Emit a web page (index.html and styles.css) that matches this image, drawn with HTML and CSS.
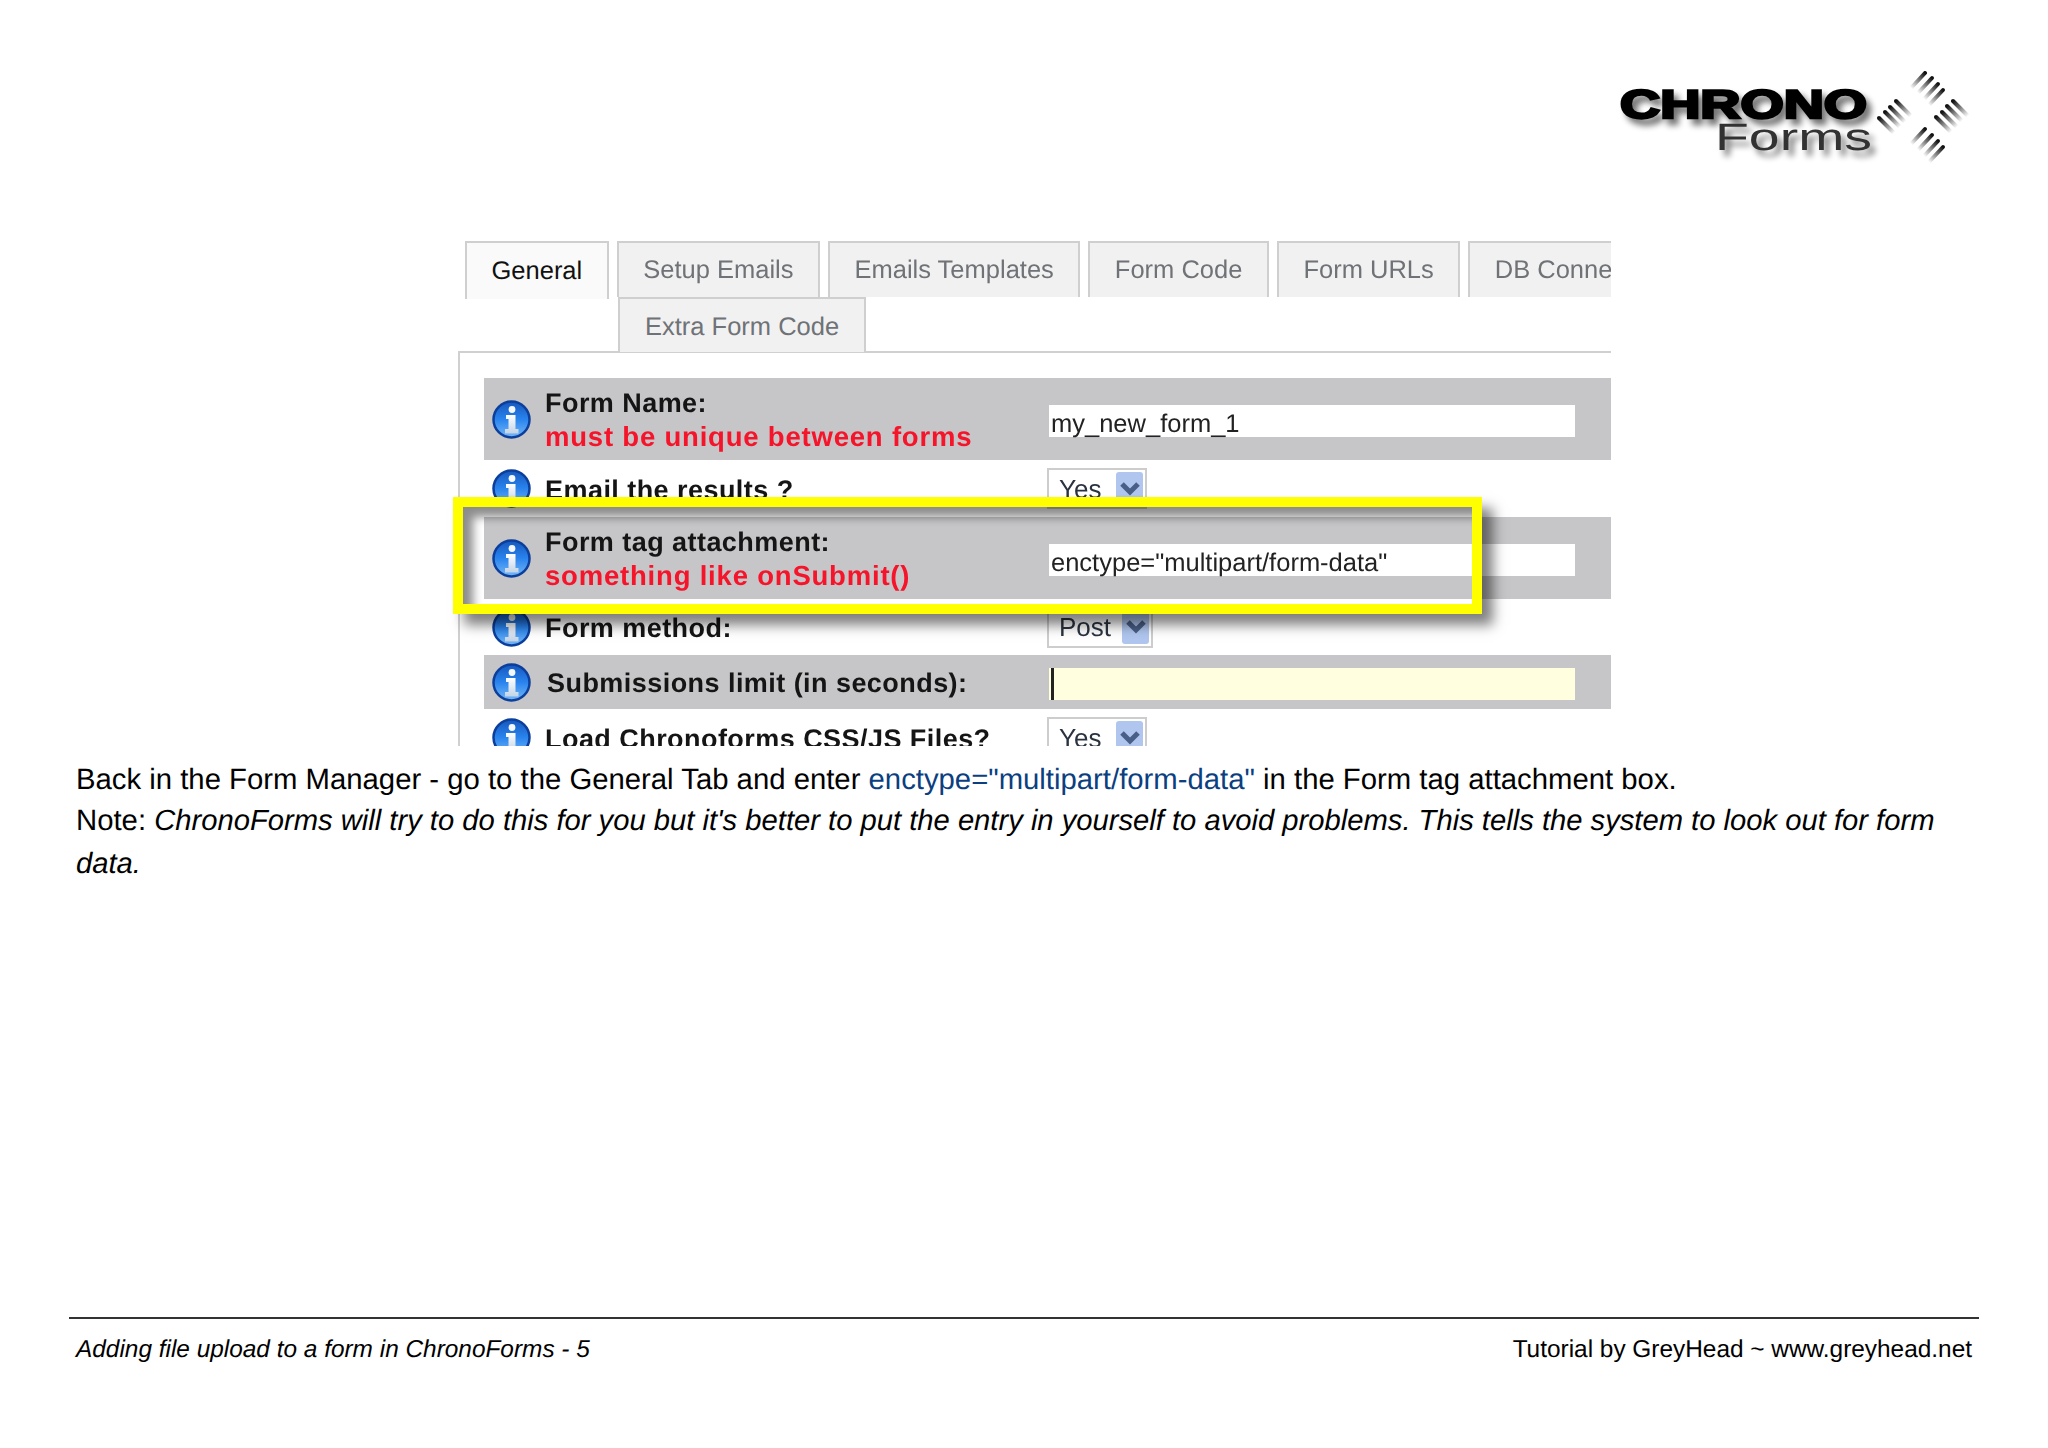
FILE: index.html
```html
<!DOCTYPE html>
<html lang="en">
<head>
    <meta charset="UTF-8">
    <title>Adding file upload to a form in ChronoForms - 5</title>
    <link rel="stylesheet" href="styles.css">
</head>
<body>
    <div class="page">
        <header class="top">
            <svg class="logo" width="380" height="120" viewBox="0 0 380 120">
                <defs>
                    <filter id="soft" x="-20%" y="-30%" width="150%" height="170%">
                        <feGaussianBlur in="SourceAlpha" stdDeviation="3"/>
                        <feOffset dx="5" dy="6"/>
                        <feComponentTransfer><feFuncA type="linear" slope="0.55"/></feComponentTransfer>
                        <feMerge><feMergeNode/><feMergeNode in="SourceGraphic"/></feMerge>
                    </filter>
                    <linearGradient id="fadeL" x1="1" y1="0" x2="0" y2="1">
                        <stop offset="0" stop-color="#111"/>
                        <stop offset="1" stop-color="#111" stop-opacity="0"/>
                    </linearGradient>
                    <linearGradient id="fadeR" x1="0" y1="0" x2="1" y2="1">
                        <stop offset="0" stop-color="#111"/>
                        <stop offset="1" stop-color="#111" stop-opacity="0"/>
                    </linearGradient>
                    <line id="markL" x1="0" y1="0" x2="-14" y2="15" stroke="url(#fadeL)"/>
                    <line id="markR" x1="0" y1="0" x2="15" y2="15" stroke="url(#fadeR)"/>
                </defs>
                <text class="logo-chrono" x="10" y="58" textLength="247" lengthAdjust="spacingAndGlyphs" filter="url(#soft)">CHRONO</text>
                <text class="logo-forms" x="105" y="90" textLength="157" lengthAdjust="spacingAndGlyphs" filter="url(#soft)">Forms</text>
                <g class="logo-marks">
                    <!-- top -->
                    <use href="#markL" x="315" y="13"/>
                    <use href="#markL" x="322" y="18"/>
                    <use href="#markL" x="328" y="24"/>
                    <use href="#markL" x="333" y="30"/>
                    <!-- left -->
                    <use href="#markR" x="269" y="58"/>
                    <use href="#markR" x="275" y="52"/>
                    <use href="#markR" x="280" y="47"/>
                    <use href="#markR" x="286" y="41"/>
                    <!-- right -->
                    <use href="#markR" x="326" y="57"/>
                    <use href="#markR" x="332" y="52"/>
                    <use href="#markR" x="337" y="46"/>
                    <use href="#markR" x="343" y="41"/>
                    <!-- bottom -->
                    <use href="#markL" x="315" y="69"/>
                    <use href="#markL" x="322" y="75"/>
                    <use href="#markL" x="328" y="81"/>
                    <use href="#markL" x="333" y="87"/>
                </g>
            </svg>
        </header>

        <div class="shot">
            <div class="clip">
                <div class="tabs">
                    <span class="tab tab-on">General</span>
                    <span class="tab">Setup Emails</span>
                    <span class="tab">Emails Templates</span>
                    <span class="tab">Form Code</span>
                    <span class="tab">Form URLs</span>
                    <span class="tab tab-cut">DB Conne</span>
                </div>
                <div class="tabs2">
                    <span class="tab">Extra Form Code</span>
                </div>
                <div class="panel">
                    <div class="row grey tall">
                        <svg class="info"><use href="#info"/></svg>
                        <div class="lbl">Form Name:<em>must be unique between forms</em></div>
                        <div class="field">my_new_form_1</div>
                    </div>
                    <div class="row h57">
                        <svg class="info"><use href="#info"/></svg>
                        <div class="lbl">Email the results ?</div>
                        <div class="sel">Yes<i><svg width="22" height="14" viewBox="0 0 22 14"><path d="M3 2l8 8 8-8"/></svg></i></div>
                    </div>
                    <div class="row grey tall">
                        <svg class="info"><use href="#info"/></svg>
                        <div class="lbl">Form tag attachment:<em>something like onSubmit()</em></div>
                        <div class="field">enctype="multipart/form-data"</div>
                    </div>
                    <div class="row h56">
                        <svg class="info"><use href="#info"/></svg>
                        <div class="lbl">Form method:</div>
                        <div class="sel sel-wide">Post<i><svg width="22" height="14" viewBox="0 0 22 14"><path d="M3 2l8 8 8-8"/></svg></i></div>
                    </div>
                    <div class="row grey h54">
                        <svg class="info"><use href="#info"/></svg>
                        <div class="lbl lbl-nudge">Submissions limit (in seconds):</div>
                        <div class="field field-on"><b></b></div>
                    </div>
                    <div class="row h57">
                        <svg class="info"><use href="#info"/></svg>
                        <div class="lbl">Load Chronoforms CSS/JS Files?</div>
                        <div class="sel">Yes<i><svg width="22" height="14" viewBox="0 0 22 14"><path d="M3 2l8 8 8-8"/></svg></i></div>
                    </div>
                </div>
            </div>
            <div class="mark"></div>
        </div>

        <div class="copy">
            <p>Back in the Form Manager - go to the General Tab and enter <span class="code">enctype="multipart/form-data"</span> in the Form tag attachment box.</p>
            <p>Note: <em>ChronoForms will try to do this for you but it's better to put the entry in yourself to avoid problems. This tells the system to look out for form data.</em></p>
        </div>

        <footer class="foot">
            <em>Adding file upload to a form in ChronoForms - 5</em>
            <span>Tutorial by GreyHead ~ www.greyhead.net</span>
        </footer>
    </div>

    <svg width="0" height="0" class="defs">
        <defs>
            <linearGradient id="ball" x1="0" y1="0" x2="0" y2="1">
                <stop offset="0" stop-color="#1557bd"/>
                <stop offset="0.5" stop-color="#2a84ee"/>
                <stop offset="1" stop-color="#74b8f7"/>
            </linearGradient>
            <linearGradient id="stem" x1="0" y1="0" x2="0" y2="1">
                <stop offset="0" stop-color="#ffffff"/>
                <stop offset="1" stop-color="#c3d3e6"/>
            </linearGradient>
            <symbol id="info" viewBox="0 0 39 39">
                <circle cx="19.5" cy="19.5" r="18" fill="url(#ball)" stroke="#0c3f9c" stroke-width="2.5"/>
                <circle cx="20" cy="9.5" r="3.4" fill="#f4f8fc"/>
                <path d="M14 15h9.5v14h3v4.5H13v-4.5h3.5v-10H14z" fill="url(#stem)"/>
            </symbol>
        </defs>
    </svg>
</body>
</html>
```

FILE: styles.css
```css
body {
    margin: 0;
    background: #fff;
    color: #000;
    font-family: "Liberation Sans", Arial, sans-serif;
    text-rendering: geometricPrecision;
}
.page {
    width: 2048px;
    height: 1448px;
    position: relative;
    overflow: hidden;
}
.defs {
    position: absolute;
}

/* logo */
.top {
    height: 241px;
    display: flex;
    justify-content: flex-end;
    align-items: flex-start;
    padding: 60px 58px 0 0;
    box-sizing: border-box;
}
.logo {
    filter: blur(0.7px);
}
.logo-chrono {
    font: bold 40px "Liberation Sans", sans-serif;
    stroke: #000;
    stroke-width: 2.5px;
    fill: #000;
}
.logo-forms {
    font: 38px "Liberation Sans", sans-serif;
    fill: #333;
}
.logo-marks {
    stroke-width: 4px;
    stroke-linecap: round;
}

/* screenshot */
.shot {
    position: relative;
    width: 1153px;
    height: 505px;
    margin-left: 458px;
    filter: blur(0.7px);
}
.clip {
    height: 505px;
    overflow: hidden;
}
.tabs {
    display: flex;
    gap: 8px;
    height: 56px;
    padding-left: 7px;
    white-space: nowrap;
}
.tabs2 {
    display: flex;
    height: 55px;
    padding-left: 160px;
}
.tab {
    display: flex;
    align-items: center;
    justify-content: center;
    box-sizing: border-box;
    padding: 1px 24.5px 0;
    height: 56px;
    background: #f1f1f1;
    border: 2px solid #cfcfcf;
    border-bottom: 0;
    color: #6f7276;
    font-size: 25.5px;
}
.tab-on {
    height: 58px;
    background: #fafafa;
    color: #111;
    position: relative;
}
.tab-cut {
    border-right: 0;
    justify-content: flex-start;
    flex: 1;
    min-width: 0;
    overflow: hidden;
}
.tabs2 .tab {
    height: 55px;
    padding: 3px 25px 0;
    position: relative;
    z-index: 1;
}
.panel {
    border-top: 2px solid #d0d0d0;
    border-left: 2px solid #d0d0d0;
    margin-top: -1px;
    padding: 25px 0 0 24px;
}
.row {
    display: flex;
    align-items: center;
    padding-left: 8px;
}
.row.grey {
    background: #c6c5c7;
}
.tall { height: 82px; }
.h57 { height: 57px; }
.h56 { height: 56px; }
.h54 { height: 54px; }
.info {
    width: 39px;
    height: 39px;
    flex: none;
    margin-right: 14px;
}
.lbl {
    width: 504px;
    flex: none;
    padding-top: 2px;
    font: bold 27px/34px "Liberation Sans", sans-serif;
    letter-spacing: 0.45px;
    color: #151515;
}
.lbl em {
    display: block;
    font-style: normal;
    font-size: 27.5px;
    letter-spacing: 0.8px;
    color: #f5142a;
}
.lbl-nudge {
    padding-left: 2px;
    width: 502px;
}
.field {
    width: 526px;
    height: 32px;
    margin-top: 4px;
    box-sizing: border-box;
    background: #fff;
    padding-left: 2px;
    font-size: 25.5px;
    line-height: 39px;
    color: #222;
    white-space: nowrap;
    flex: none;
}
.field-on {
    background: #ffffdf;
}
.field-on b {
    display: block;
    width: 3px;
    height: 32px;
    background: #222;
}
.sel {
    width: 100px;
    height: 41px;
    margin-left: -2px;
    box-sizing: border-box;
    border: 2px solid #cdcdcd;
    background: #fff;
    display: flex;
    align-items: center;
    justify-content: space-between;
    padding: 0 2px 0 10px;
    font-size: 26px;
    line-height: 40px;
    color: #2a3340;
}
.sel-wide {
    width: 106px;
}
.sel i {
    width: 27px;
    height: 33px;
    border-radius: 3px;
    background: #b0c6ee;
    display: flex;
    align-items: center;
    justify-content: center;
}
.sel path {
    fill: none;
    stroke: #4a5f87;
    stroke-width: 5px;
}
.mark {
    position: absolute;
    left: -5px;
    top: 256px;
    width: 1029px;
    height: 117px;
    box-sizing: border-box;
    border: 10px solid #ffff00;
    box-shadow: 11px 11px 12px rgba(0, 0, 0, 0.5), inset 10px 10px 10px rgba(0, 0, 0, 0.45);
}

/* text under the screenshot */
.copy {
    margin: 12.5px 0 0 76px;
    width: 1900px;
    font-size: 29.3px;
    line-height: 41.8px;
}
.copy p {
    margin: 0;
}
.copy em {
    font-size: 29.2px;
}
.code {
    color: #0b3f7f;
}
.foot {
    position: absolute;
    left: 69px;
    top: 1317px;
    width: 1910px;
    box-sizing: border-box;
    border-top: 2px solid #333;
    padding: 17px 7px 0;
    display: flex;
    justify-content: space-between;
    font-size: 24.4px;
}
```
